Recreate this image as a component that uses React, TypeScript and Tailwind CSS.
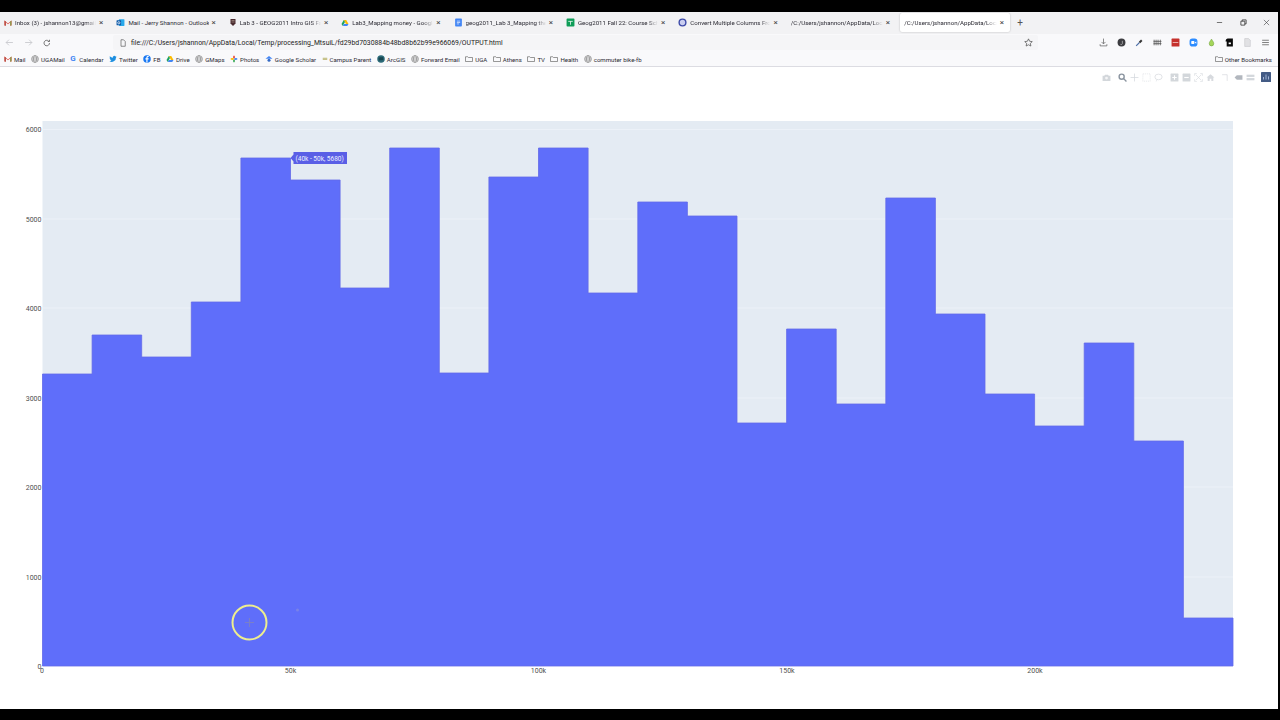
import React from "react";

const font = { fontFamily: 'Roboto, "Noto Sans", sans-serif' };

const Gmail = () => (
  <svg viewBox="0 0 16 16" className="w-[8px] h-[8px] shrink-0">
    <path d="M1 13V3l7 6 7-6v10h-3V7L8 10.500 4 7v6z" fill="#d93a2f" />
    <path d="M1 13V3l3 2.500V13z" fill="#b9544a" />
    <path d="M15 13V3l-3 2.500V13z" fill="#8f9a50" />
  </svg>
);
const Outlook = () => (
  <svg viewBox="0 0 16 16" className="w-[9px] h-[9px] shrink-0">
    <rect x="5" y="2" width="10" height="12" rx="1" fill="#28a8ea" />
    <rect x="1" y="4" width="8" height="9" rx="1" fill="#0f5aa8" />
    <circle cx="5" cy="8.500" r="2" fill="none" stroke="#fff" strokeWidth="1.300" />
  </svg>
);
const Shield = () => (
  <svg viewBox="0 0 16 16" className="w-[8px] h-[9px] shrink-0">
    <path d="M3 1h10v9l-5 5-5-5z" fill="#4a2b2f" />
    <path d="M5 4h6M5 7h6" stroke="#c9b8a8" strokeWidth="1" />
  </svg>
);
const Drive = () => (
  <svg viewBox="0 0 16 16" className="w-[8px] h-[8px] shrink-0">
    <path d="M5.500 2h5L15 10h-5z" fill="#fbbc04" />
    <path d="M5.500 2 1 10l2.500 4L8 6z" fill="#1ea362" />
    <path d="M3.500 14h9l2.500-4H6z" fill="#4285f4" />
  </svg>
);
const Docs = () => (
  <svg viewBox="0 0 16 16" className="w-[9px] h-[9px] shrink-0">
    <rect x="2" y="1" width="12" height="14" rx="1.500" fill="#4285f4" />
    <path d="M5 5.500h6M5 8h6M5 10.500h4" stroke="#fff" strokeWidth="1.100" />
  </svg>
);
const Sheets = () => (
  <svg viewBox="0 0 16 16" className="w-[9px] h-[9px] shrink-0">
    <rect x="1" y="1" width="14" height="14" rx="1.500" fill="#0f9d58" />
    <path d="M4 6h8M8 6v6" stroke="#fff" strokeWidth="1.300" />
  </svg>
);
const BlueRing = () => (
  <svg viewBox="0 0 16 16" className="w-[9px] h-[9px] shrink-0">
    <circle cx="8" cy="8" r="6" fill="#c9cdf0" stroke="#3d4aa8" strokeWidth="2.500" />
  </svg>
);
const Globe = () => (
  <svg viewBox="0 0 16 16" className="w-[8px] h-[8px] shrink-0" fill="none" stroke="#666" strokeWidth="1">
    <circle cx="8" cy="8" r="6.800" />
    <ellipse cx="8" cy="8" rx="3" ry="6.800" />
    <path d="M1.500 6h13M1.500 10h13" />
  </svg>
);
const Folder = () => (
  <svg viewBox="0 0 16 16" className="w-[8px] h-[8px] shrink-0" fill="none" stroke="#555" strokeWidth="1.200">
    <path d="M1 13V3.500h4.500L7 5h8v8z" />
  </svg>
);
const GLetter = () => <span className="w-[7px] text-[8px] leading-none font-bold text-[#4285f4] shrink-0">G</span>;
const Twitter = () => (
  <svg viewBox="0 0 24 24" className="w-[8px] h-[8px] shrink-0">
    <path fill="#1d8fe0" d="M23 5c-.8.4-1.700.6-2.600.7.900-.6 1.600-1.400 2-2.500-.9.500-1.800.9-2.900 1.100A4.500 4.500 0 0 0 11.700 8.400 13 13 0 0 1 2.500 3.700a4.500 4.500 0 0 0 1.400 6c-.7 0-1.400-.2-2-.6 0 2.200 1.500 4 3.600 4.500-.7.200-1.400.2-2 .1.600 1.800 2.300 3.100 4.200 3.100A9 9 0 0 1 1 18.700 13 13 0 0 0 21 7.300c.8-.6 1.500-1.400 2-2.300z" />
  </svg>
);
const Fb = () => (
  <svg viewBox="0 0 16 16" className="w-[8px] h-[8px] shrink-0">
    <circle cx="8" cy="8" r="7.500" fill="#1877f2" />
    <path d="M9 15V9h2l.4-2.300H9V5.300c0-.7.3-1.100 1.200-1.100h1.200V2.200C11 2.100 10.400 2 9.800 2 8 2 6.700 3.100 6.700 5.100v1.600H4.800V9h1.900v6z" fill="#fff" />
  </svg>
);
const Pinwheel = () => (
  <svg viewBox="0 0 16 16" className="w-[8px] h-[8px] shrink-0">
    <path d="M8 8C5 6 6 2 8 1c2 1 3 5 0 7z" fill="#ea4335" />
    <path d="M8 8c2-3 6-2 7 0-1 2-5 3-7 0z" fill="#4285f4" />
    <path d="M8 8c3 2 2 6 0 7-2-1-3-5 0-7z" fill="#34a853" />
    <path d="M8 8c-2 3-6 2-7 0 1-2 5-3 7 0z" fill="#fbbc04" />
  </svg>
);
const Scholar = () => (
  <svg viewBox="0 0 16 16" className="w-[8px] h-[8px] shrink-0">
    <path d="M8 2 1 7.500h14z" fill="#4285f4" />
    <circle cx="8" cy="10.500" r="3" fill="#356ac3" />
  </svg>
);
const Campus = () => (
  <svg viewBox="0 0 16 16" className="w-[6px] h-[8px] shrink-0">
    <path d="M2 6h12M2 9h12" stroke="#a9a24a" strokeWidth="2" />
  </svg>
);
const Arc = () => (
  <svg viewBox="0 0 16 16" className="w-[8px] h-[8px] shrink-0">
    <circle cx="8" cy="8" r="7.500" fill="#2c6a78" />
    <path d="M3 6c3-3 5 0 9-2l1 5c-3 3-7 0-9 3z" fill="#174650" />
  </svg>
);

const tabs: { icon: React.ReactNode; title: string; plain?: boolean }[] = [
  { icon: <Gmail />, title: "Inbox (3) - jshannon13@gmail.com" },
  { icon: <Outlook />, title: "Mail - Jerry Shannon - Outlook", plain: true },
  { icon: <Shield />, title: "Lab 3 - GEOG2011 Intro GIS Fall 2022" },
  { icon: <Drive />, title: "Lab3_Mapping money - Google Drive" },
  { icon: <Docs />, title: "geog2011_Lab 3_Mapping the 1 percent" },
  { icon: <Sheets />, title: "Geog2011 Fall 22: Course Schedule" },
  { icon: <BlueRing />, title: "Convert Multiple Columns From Wide" },
  { icon: null, title: "/C:/Users/jshannon/AppData/Local/Temp" },
];

const Tab = ({ icon, title, active, plain }: { icon: React.ReactNode; title: string; active?: boolean; plain?: boolean }) => (
  <div className={active ? "w-[110px] h-[19px] mx-[1px] flex items-center gap-[3px] pl-[4px] pr-[6px] bg-white rounded-[2px] shadow-[0_0_2px_rgba(0,0,0,0.25)] shrink-0" : "w-[112.400px] h-[19px] flex items-center gap-[3px] pl-[4px] pr-[9px] shrink-0"}>
    {icon}
    <span className={plain ? "flex-1 min-w-0 pt-[0.500px] overflow-hidden whitespace-nowrap text-[6.100px] text-[#2b2a33]" : "flex-1 min-w-0 pt-[0.500px] overflow-hidden whitespace-nowrap text-[6.100px] text-[#2b2a33] [mask-image:linear-gradient(to_right,black_88%,transparent)]"}>{title}</span>
    <span className="text-[8px] leading-none text-[#444] shrink-0">×</span>
  </div>
);

const bookmarks: { icon: React.ReactNode; label: string }[] = [
  { icon: <Gmail />, label: "Mail" },
  { icon: <Globe />, label: "UGAMail" },
  { icon: <GLetter />, label: "Calendar" },
  { icon: <Twitter />, label: "Twitter" },
  { icon: <Fb />, label: "FB" },
  { icon: <Drive />, label: "Drive" },
  { icon: <Globe />, label: "GMaps" },
  { icon: <Pinwheel />, label: "Photos" },
  { icon: <Scholar />, label: "Google Scholar" },
  { icon: <Campus />, label: "Campus Parent" },
  { icon: <Arc />, label: "ArcGIS" },
  { icon: <Globe />, label: "Forward Email" },
  { icon: <Folder />, label: "UGA" },
  { icon: <Folder />, label: "Athens" },
  { icon: <Folder />, label: "TV" },
  { icon: <Folder />, label: "Health" },
  { icon: <Globe />, label: "commuter bike-fb" },
];

const heights = [374, 335, 357, 302, 158, 180, 288, 148, 373, 177, 148, 293, 202, 216, 423, 329, 404, 198, 314, 394, 426, 343, 441, 618];
const x0 = 42.5;
const bw = 1190.5 / 24;
const barPath = (() => {
  let d = `M${x0} 666`;
  heights.forEach((y, i) => {
    d += `V${y}H${(x0 + (i + 1) * bw).toFixed(1)}`;
  });
  return d + "V666Z";
})();

const yTicks: [string, number][] = [["6000", 129.5], ["5000", 219], ["4000", 308], ["3000", 398], ["2000", 487], ["1000", 577]];
const xTicks: [string, number][] = [["0", 42], ["50k", 290.5], ["100k", 538.5], ["150k", 787], ["200k", 1035]];

const S = ({ className = "", children, vb = "0 0 16 16" }: { className?: string; children: React.ReactNode; vb?: string }) => (
  <svg viewBox={vb} className={"shrink-0 " + className}>{children}</svg>
);

const Modebar = () => {
  const c = "w-[9px] h-[9px]";
  return (
    <div className="absolute top-[5px] right-[7px] flex items-center opacity-90">
      <S className={c}><path d="M1 5h3l1.500-2h5L12 5h3v9H1z" fill="#cfd3d8" /><circle cx="8" cy="9" r="2.500" fill="#f4f5f6" /></S>
      <S className={c + " ml-[7px]"}><circle cx="6.500" cy="6.500" r="4.500" fill="none" stroke="#7f8a96" strokeWidth="2.500" /><path d="M10 10l5 5" stroke="#7f8a96" strokeWidth="2.500" /></S>
      <S className={c + " ml-[3px]"}><path d="M8 1v14M1 8h14" stroke="#cfd3d8" strokeWidth="1.300" /></S>
      <S className={c + " ml-[3px]"}><rect x="1.500" y="1.500" width="13" height="13" fill="none" stroke="#d3d6db" strokeDasharray="2 1.500" /></S>
      <S className={c + " ml-[3px]"}><ellipse cx="8" cy="7" rx="6.500" ry="5" fill="none" stroke="#d3d6db" strokeWidth="1.300" /><path d="M5 12l-1 3" stroke="#d3d6db" /></S>
      <S className={c + " ml-[7px]"}><rect x="1" y="1" width="14" height="14" rx="1" fill="#cfd3d8" /><path d="M8 4v8M4 8h8" stroke="#fff" strokeWidth="2" /></S>
      <S className={c + " ml-[3px]"}><rect x="1" y="1" width="14" height="14" rx="1" fill="#cfd3d8" /><path d="M4 8h8" stroke="#fff" strokeWidth="2" /></S>
      <S className={c + " ml-[3px]"}><path d="M1 5V1h4M11 1h4v4M15 11v4h-4M5 15H1v-4M3 3l10 10M13 3 3 13" fill="none" stroke="#d3d6db" strokeWidth="1.100" /></S>
      <S className={c + " ml-[3px]"}><path d="M8 2 1 8h2v6h3.500v-4h3v4H13V8h2z" fill="#d3d6db" /></S>
      <S className={c + " ml-[6px]"}><path d="M2 3h9M11 3v11" stroke="#d3d6db" strokeWidth="1.300" fill="none" /></S>
      <S className={c + " ml-[4px]"}><path d="M1 8l4-4h10v8H5z" fill="#aab0b8" /></S>
      <S className={c + " ml-[3px]"}><rect x="1" y="3" width="14" height="4" fill="#cfd3d8" /><rect x="1" y="9" width="14" height="4" fill="#cfd3d8" /></S>
      <S className={"w-[10px] h-[10px] ml-[6px]"}><rect width="16" height="16" rx="1" fill="#2f4a78" /><path d="M4 12V8M8 12V4M12 12V7" stroke="#9fb4d8" strokeWidth="1.500" /></S>
    </div>
  );
};

export default function App() {
  return (
    <div className="w-[1280px] h-[720px] bg-black overflow-hidden flex flex-col pt-[12px] pb-[11px] pr-[2px]" style={font}>
      {/* tab strip */}
      <div className="h-[22px] pb-[1px] bg-[#f2f2f4] flex items-center shrink-0">
        {tabs.map((t) => <Tab key={t.title} icon={t.icon} title={t.title} plain={t.plain} />)}
        <Tab icon={null} title="/C:/Users/jshannon/AppData/Local/Temp" active />
        <span className="ml-[6px] text-[10px] leading-none text-[#555]">+</span>
        <div className="ml-auto flex items-center gap-[16.500px] pr-[8px]">
          <S className="w-[7px] h-[7px]"><path d="M2 8h12" stroke="#333" strokeWidth="1.500" /></S>
          <S className="w-[7px] h-[7px]"><path d="M2 5h9v9H2zM5 5V2h9v9h-3" fill="none" stroke="#333" strokeWidth="1.800" /></S>
          <S className="w-[7px] h-[7px]"><path d="M2 2l12 12M14 2 2 14" stroke="#333" strokeWidth="1.300" /></S>
        </div>
      </div>
      {/* toolbar */}
      <div className="h-[17px] bg-[#f9f9fb] flex items-center shrink-0">
        <div className="w-[113px] flex items-center pl-[5px] shrink-0">
          <S className="w-[9px] h-[9px]"><path d="M14 8H2M7 3 2 8l5 5" fill="none" stroke="#c2c3c8" strokeWidth="1.400" /></S>
          <S className="w-[9px] h-[9px] ml-[10px]"><path d="M2 8h12M9 3l5 5-5 5" fill="none" stroke="#c2c3c8" strokeWidth="1.400" /></S>
          <S className="w-[8px] h-[8px] ml-[10px]"><path d="M13 8a5.500 5.500 0 1 1-1.800-4M13 1.500V5H9.500" fill="none" stroke="#444" strokeWidth="1.400" /></S>
        </div>
        <div className="w-[925px] h-[15px] bg-[#f5f5f7] rounded-[2px] flex items-center pl-[6px] pr-[2px] shrink-0">
          <S className="w-[8px] h-[8px]"><path d="M4 1.500h5L12.500 5v9.500H4z" fill="none" stroke="#444" strokeWidth="1.200" /></S>
          <span className="ml-[4px] pt-[2px] text-[6.850px] text-[#222] whitespace-nowrap">file:///C:/Users/jshannon/AppData/Local/Temp/processing_MtsuiL/fd29bd7030884b48bd8b62b99e966069/OUTPUT.html</span>
          <S className="w-[9px] h-[9px] ml-auto mr-[3px]"><path d="M8 1.500l2 4.300 4.700.6-3.400 3.200.9 4.700L8 12l-4.200 2.300.9-4.700L1.300 6.400 6 5.800z" fill="none" stroke="#444" strokeWidth="1.200" /></S>
        </div>
        <div className="flex items-center ml-[61px]">
          <S className="w-[9px] h-[9px]"><path d="M8 1v9M4.500 7 8 10.500 11.500 7M2 11v3h12v-3" fill="none" stroke="#555" strokeWidth="1.200" /></S>
          <S className="w-[9px] h-[9px] ml-[9px]"><circle cx="8" cy="8" r="7" fill="#3c3c40" /><path d="M9.500 5v5a2 2 0 0 1-3.500 1" fill="none" stroke="#ccc" strokeWidth="1.200" /></S>
          <S className="w-[9px] h-[9px] ml-[9px]"><path d="M2 14l6-6" stroke="#4d6fa8" strokeWidth="2" /><path d="M8 8l4-4" stroke="#333" strokeWidth="3.500" /></S>
          <S className="w-[9px] h-[9px] ml-[9px]"><path d="M2 3v10M5.500 3v10M9 3v10M13 3v10M1 6h14M1 10h14" stroke="#555" strokeWidth="1.400" /></S>
          <S className="w-[9px] h-[9px] ml-[9px]"><rect x="1" y="1" width="14" height="14" rx="1" fill="#c5302c" /><path d="M3 8h10" stroke="#f2c4c0" strokeWidth="1.500" /></S>
          <S className="w-[9px] h-[9px] ml-[9px]"><rect x="1" y="1" width="14" height="14" rx="5" fill="#2d8cff" /><rect x="4" y="5.500" width="5.500" height="5" rx="1" fill="#fff" /><path d="M10 8l3-2v4z" fill="#fff" /></S>
          <S className="w-[9px] h-[9px] ml-[9px]"><path d="M8 2c2.500 4 4 5.500 4 8a4 4 0 0 1-8 0c0-2.500 1.500-4 4-8z" fill="#a5d65a" stroke="#6a9d2e" /></S>
          <S className="w-[9px] h-[9px] ml-[9px]"><path d="M5 1h9v14H3V6l-2 0c0-3 2-5 4-5z" fill="#0a0a0a" /><rect x="6.500" y="8" width="4" height="3" fill="#fff" /></S>
          <S className="w-[9px] h-[9px] ml-[9px]"><path d="M3 1h7l3 3v11H3z" fill="#e1e1e4" stroke="#c5c5c9" /></S>
          <S className="w-[9px] h-[9px] ml-[9px]"><path d="M2 4h12M2 8h12M2 12h12" stroke="#555" strokeWidth="1.300" /></S>
        </div>
      </div>
      {/* bookmarks */}
      <div className="h-[16px] pt-[1.500px] bg-[#f9f9fb] border-b border-[#dcdce2] flex items-center pl-[4px] pr-[6px] shrink-0">
        <div className="flex items-center gap-[5.500px]">
          {bookmarks.map((b) => (
            <div key={b.label} className="flex items-center gap-[2px] text-[6.100px] text-[#2b2a33] whitespace-nowrap">
              {b.icon}
              <span className="pt-[1.500px]">{b.label}</span>
            </div>
          ))}
        </div>
        <div className="ml-auto flex items-center gap-[2px] text-[6.100px] text-[#2b2a33] whitespace-nowrap">
          <Folder />
          <span className="pt-[1.500px]">Other Bookmarks</span>
        </div>
      </div>
      {/* page */}
      <div className="relative flex-1 bg-white min-h-0">
        <svg viewBox="0 67 1278 642" className="block w-full h-full">
          <rect x="42.500" y="121" width="1190.500" height="545" fill="#e4ebf3" />
          {yTicks.map(([l, y]) => (
            <g key={l}>
              <line x1="42.500" x2="1233" y1={y} y2={y} stroke="#ecf1f8" strokeWidth="1" />
              <text x="41.500" y={y + 2.5} textAnchor="end" fontSize="7" fill="#4f4f4f" style={font}>{l}</text>
            </g>
          ))}
          <path d={barPath} fill="#5f6efa" stroke="#636ae8" strokeWidth="0.8" />
          <text x="41.500" y="668.500" textAnchor="end" fontSize="7" fill="#4f4f4f" style={font}>0</text>
          {xTicks.map(([l, x]) => (
            <text key={l} x={x} y="673" textAnchor="middle" fontSize="7" fill="#4f4f4f" style={font}>{l}</text>
          ))}
          <circle cx="249.500" cy="622.500" r="17" fill="none" stroke="#eeee8e" strokeWidth="2" />
          <path d="M249.500 618v9M245 622.500h9" stroke="#7a7fc8" strokeWidth="1.200" />
          <circle cx="297.500" cy="610" r="1.500" fill="#7a82e8" />
          <path d="M290.500 158l3-3.500v-2.500h53.500v12h-53.500v-2.500z" fill="#5a5fe6" />
          <text x="295.500" y="160.500" fontSize="6.500" fill="#eef0ff" style={font}>(40k - 50k, 5680)</text>
        </svg>
        <Modebar />
      </div>
    </div>
  );
}
